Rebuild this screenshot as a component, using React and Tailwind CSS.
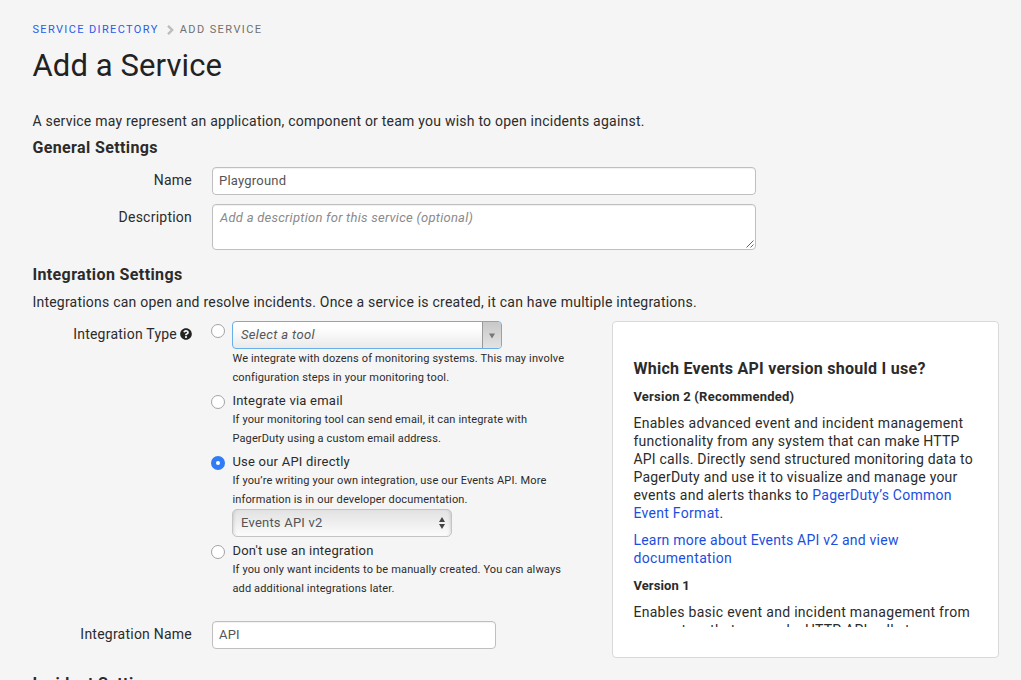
import { FaQuestionCircle } from "react-icons/fa";

function Label({ children, className = "" }) {
  return (
    <div className={`flex h-5 w-[160px] shrink-0 items-center justify-end text-sm tracking-[0.23px] whitespace-nowrap ${className}`}>
      {children}
    </div>
  );
}

function Radio({ checked, className = "" }) {
  return (
    <span
      className={`flex size-[14px] shrink-0 items-center justify-center rounded-full ${
        checked ? "bg-[#2f7cf6]" : "border border-[#a3a3a3] bg-white"
      } ${className}`}
    >
      {checked && <span className="size-1 rounded-full bg-white" />}
    </span>
  );
}

function Hint({ lines }) {
  return (
    <div className="pl-[0.4px] text-[11px] leading-[19px] tracking-[0.15px] whitespace-nowrap">
      {lines.map((line) => (
        <div key={line}>{line}</div>
      ))}
    </div>
  );
}

function OptionTitle({ children }) {
  return <div className="pl-[0.4px] text-[13px] leading-[19px] tracking-[0.23px]">{children}</div>;
}

function SectionTitle({ children, className = "" }) {
  return <h2 className={`h-6 pl-[0.4px] text-base leading-[26px] font-bold tracking-[0.38px] ${className}`}>{children}</h2>;
}

function TextBox({ children, className = "" }) {
  return (
    <div className={`flex h-7 items-center rounded-[4px] border border-[#bfbfbf] bg-white pl-[6px] text-[13px] tracking-[0.22px] text-[#555] shadow-[inset_0_1px_1px_rgba(0,0,0,0.06)] ${className}`}>
      {children}
    </div>
  );
}

function ApiHelp() {
  return (
    <aside className="h-[337px] w-[387px] shrink-0 rounded-[4px] border border-[#d9d9d9] bg-white px-5 pt-[34px]">
      <div className="h-[271px] overflow-hidden pl-[0.4px] text-sm leading-[18px] whitespace-nowrap">
        <h3 className="h-6 text-base leading-[26px] font-bold tracking-[0.27px]">Which Events API version should I use?</h3>
        <h4 className="mt-2 text-[13px] font-bold tracking-[0.23px]">Version 2 (Recommended)</h4>
        <p className="mt-2 tracking-[0.23px]">
          <span className="block tracking-[0.31px]">Enables advanced event and incident management</span>
          <span className="block">functionality from any system that can make HTTP</span>
          <span className="block">API calls. Directly send structured monitoring data to</span>
          <span className="block">PagerDuty and use it to visualize and manage your</span>
          <span className="block tracking-[0.27px]">
            events and alerts thanks to <a className="text-[#1a4ee0]">PagerDuty’s Common</a>
          </span>
          <span className="block tracking-[0.3px]">
            <a className="text-[#1a4ee0]">Event Format</a>.
          </span>
        </p>
        <p className="mt-[9px] tracking-[0.22px] text-[#1a4ee0]">
          <a className="block">Learn more about Events API v2 and view</a>
          <a className="block tracking-[0.35px]">documentation</a>
        </p>
        <h4 className="mt-[10px] text-[13px] font-bold tracking-[0.1px]">Version 1</h4>
        <p className="mt-2 tracking-[0.3px]">
          <span className="block">Enables basic event and incident management from</span>
          <span className="block tracking-[0.22px]">any system that can make HTTP API calls to</span>
        </p>
      </div>
    </aside>
  );
}

export default function App() {
  return (
    <main className="h-[680px] w-[1021px] overflow-hidden bg-[#f5f5f5] pt-5 pl-8 font-['Roboto',sans-serif] text-[#2b2b2b]">
      <nav className="flex h-5 items-center pl-[0.4px] text-[11px] whitespace-nowrap">
        <a className="tracking-[1.37px] text-[#2b5ce6]">SERVICE DIRECTORY</a>
        <svg className="mr-[5px] ml-[7px] -mt-px" width="9" height="10" viewBox="0 0 9 10" fill="none" stroke="#bdbdbd" strokeWidth="2.4">
          <path d="M2 0.8L6.2 5L2 9.2" />
        </svg>
        <span className="tracking-[1.42px] text-[#707070]">ADD SERVICE</span>
      </nav>
      <h1 className="mt-[5px] h-10 pl-[0.5px] text-[31px] leading-[41px] tracking-[0.1px] text-[#222]">Add a Service</h1>
      <p className="mt-[26px] h-5 pl-[0.4px] text-sm tracking-[0.23px]">
        A service may represent an application, component or team you wish to open incidents against.
      </p>

      <SectionTitle className="mt-1">General Settings</SectionTitle>
      <div className="mt-2 flex gap-5">
        <Label className="mt-[3px]">Name</Label>
        <TextBox className="w-[544px]">Playground</TextBox>
      </div>
      <div className="mt-[9px] flex gap-5">
        <Label className="mt-[3px]">Description</Label>
        <div className="flex h-[46px] w-[544px] justify-between rounded-[4px] border border-[#bfbfbf] bg-white pl-[7px] shadow-[inset_0_1px_1px_rgba(0,0,0,0.06)]">
          <span className="mt-1 text-[13px] leading-[18px] tracking-[0.25px] text-[#8a8a8a] italic">
            Add a description for this service (optional)
          </span>
          <svg className="mr-px mb-px self-end" width="8" height="8" viewBox="0 0 8 8" stroke="#555" strokeWidth="0.9">
            <path d="M0.5 7.5L7.5 0.5M4.5 7.5L7.5 4.5" />
          </svg>
        </div>
      </div>

      <SectionTitle className="mt-3">Integration Settings</SectionTitle>
      <p className="mt-[6px] h-5 pl-[0.4px] text-sm tracking-[0.223px]">
        Integrations can open and resolve incidents. Once a service is created, it can have multiple integrations.
      </p>

      <div className="mt-[9px] flex">
        <div className="w-[580px] shrink-0">
          <div className="flex h-[300px]">
            <Label className="mt-[3px]">
              Integration Type
              <FaQuestionCircle className="ml-[3px] size-3 text-[#222]" />
            </Label>
            <div className="ml-[19px] flex flex-col gap-1">
              <div className="flex gap-[7px]">
                <Radio className="mt-[3px]" />
                <div>
                  <div className="flex h-7 w-[270px] overflow-hidden rounded-[4px] border border-[#66afe9] bg-linear-to-b from-white from-20% to-[#eaeaea]">
                    <span className="flex-1 pl-2 text-[13px] leading-[26px] tracking-[0.35px] text-[#555] italic">Select a tool</span>
                    <span className="flex w-[19px] items-center justify-center border-l border-[#999] bg-linear-to-b from-[#c8c8c8] to-[#e3e3e3]">
                      <svg className="mt-[2px]" width="6" height="6" viewBox="0 0 6 6" fill="#777">
                        <path d="M0 0.5H6L3 5.5Z" />
                      </svg>
                    </span>
                  </div>
                  <Hint
                    lines={[
                      "We integrate with dozens of monitoring systems. This may involve",
                      "configuration steps in your monitoring tool.",
                    ]}
                  />
                </div>
              </div>

              <div className="flex gap-[7px]">
                <Radio className="mt-1" />
                <div>
                  <OptionTitle>Integrate via email</OptionTitle>
                  <Hint
                    lines={[
                      "If your monitoring tool can send email, it can integrate with",
                      "PagerDuty using a custom email address.",
                    ]}
                  />
                </div>
              </div>

              <div className="flex gap-[7px]">
                <Radio checked className="mt-1" />
                <div>
                  <OptionTitle>Use our API directly</OptionTitle>
                  <Hint
                    lines={[
                      "If you’re writing your own integration, use our Events API. More",
                      "information is in our developer documentation.",
                    ]}
                  />
                  <div className="flex h-7 w-[220px] items-center justify-between rounded-[5px] border border-[#c4c4c4] bg-linear-to-b from-[#e2e2e2] to-[#fcfcfc] pr-[6px] pl-2 text-[13px] tracking-[0.22px] text-[#555] shadow-[inset_3px_0_3px_-2px_rgba(0,0,0,0.12),inset_-3px_0_3px_-2px_rgba(0,0,0,0.12)]">
                    Events API v2
                    <svg width="6" height="12" viewBox="0 0 6 12" fill="#444">
                      <path d="M0 5L3 0L6 5ZM0 7L3 12L6 7Z" />
                    </svg>
                  </div>
                </div>
              </div>

              <div className="flex gap-[7px]">
                <Radio className="mt-1" />
                <div>
                  <OptionTitle>Don't use an integration</OptionTitle>
                  <Hint
                    lines={[
                      "If you only want incidents to be manually created. You can always",
                      "add additional integrations later.",
                    ]}
                  />
                </div>
              </div>
            </div>
          </div>

          <div className="flex gap-5">
            <Label className="mt-[3px]">Integration Name</Label>
            <TextBox className="w-[284px]">API</TextBox>
          </div>
          <SectionTitle className="mt-[22px]">Incident Settings</SectionTitle>
        </div>
        <ApiHelp />
      </div>
    </main>
  );
}
